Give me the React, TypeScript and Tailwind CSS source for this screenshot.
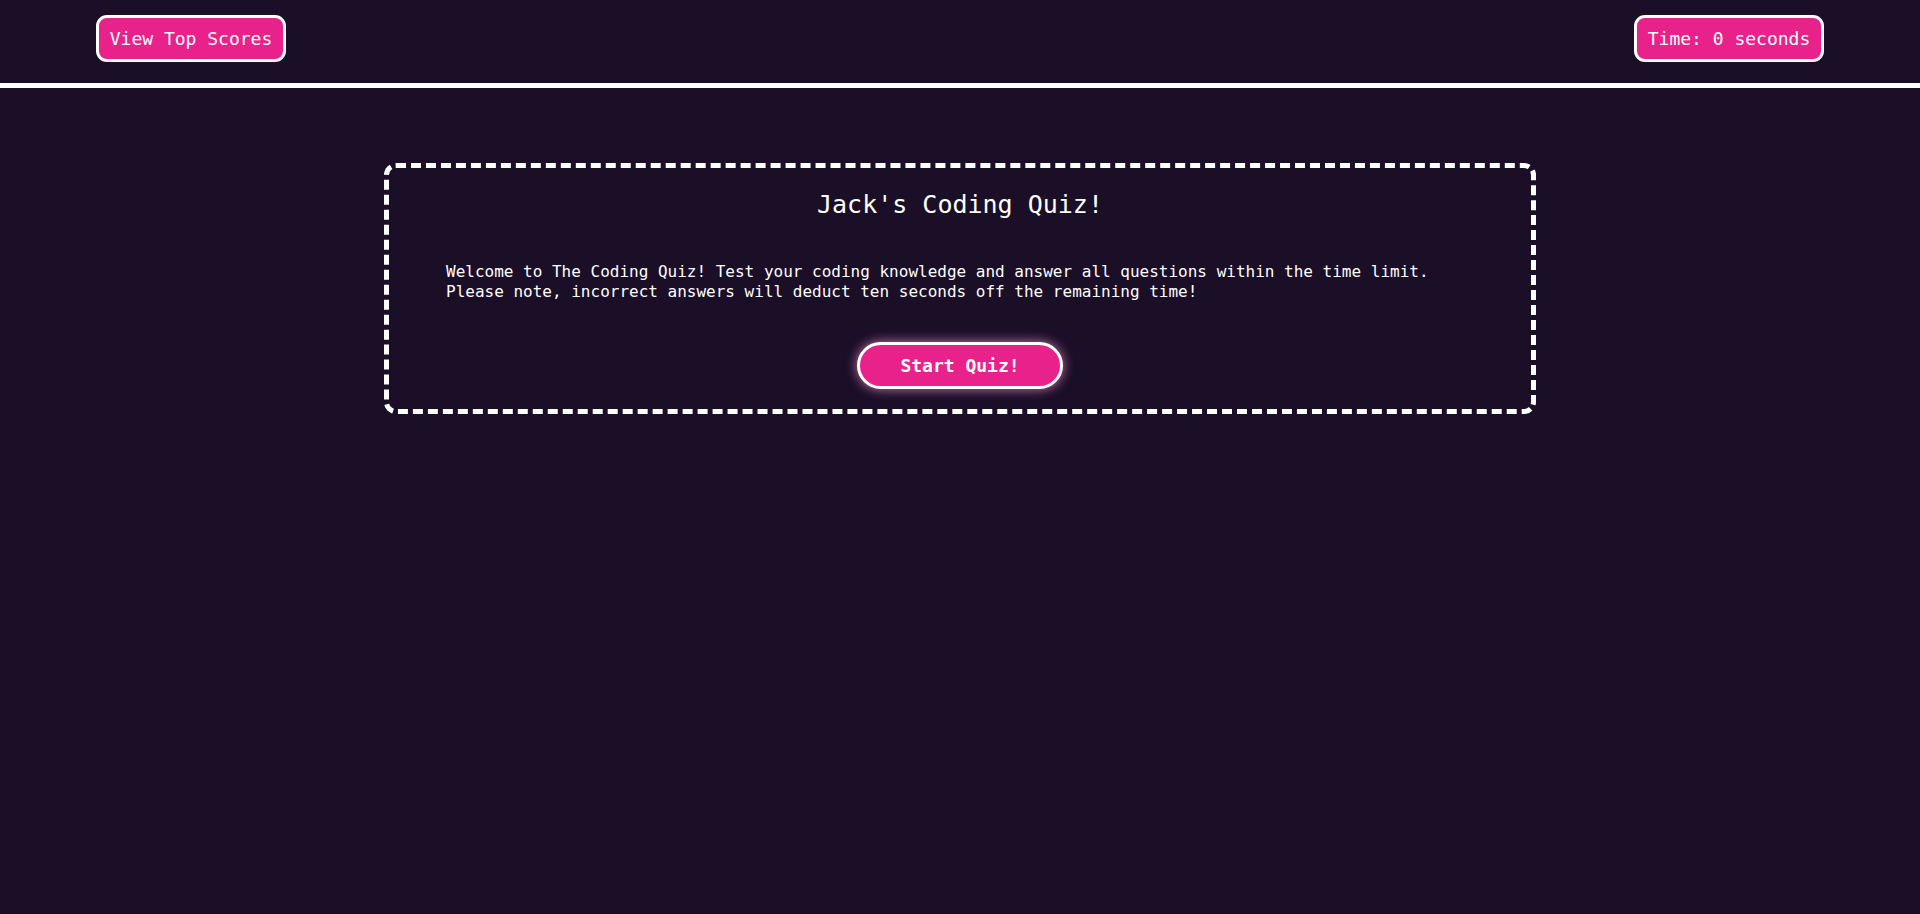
export default function App() {
    return (
        <div className="min-h-screen bg-[#1b0e27] font-['DejaVu_Sans_Mono',monospace] text-white">
            {/* Top bar */}
            <header className="flex h-[83px] items-start justify-between px-[96px] pt-[15px]">
                <button className="flex h-[47px] w-[190px] items-center justify-center rounded-[11px] border-[3px] border-white bg-[#e9218b] text-[18px] text-white">
                    View Top Scores
                </button>
                <button className="flex h-[47px] w-[190px] items-center justify-center rounded-[11px] border-[3px] border-white bg-[#e9218b] text-[18px] text-white">
                    Time: 0 seconds
                </button>
            </header>
            <div className="h-[5px] bg-white" />

            {/* Quiz card */}
            <main className="pt-[75px]">
                <section className="mx-auto flex w-[60%] flex-col items-center rounded-[12px] border-[5px] border-dashed border-white pb-[20px]">
                    <h1 className="mt-[23px] text-[25px] leading-[28px]">Jack's Coding Quiz!</h1>
                    <p className="mt-[43px] w-full px-[57px] text-[16px] leading-[20px]">
                        Welcome to The Coding Quiz! Test your coding knowledge and answer all questions within the time limit.
                        <br />
                        Please note, incorrect answers will deduct ten seconds off the remaining time!
                    </p>
                    <button className="mt-[40px] flex h-[47px] w-[206px] items-center justify-center rounded-full border-[3px] border-white bg-[#e9218b] text-[18px] font-bold text-white shadow-[0_0_12px_rgba(255,160,220,0.75)]">
                        Start Quiz!
                    </button>
                </section>
            </main>
        </div>
    );
}
